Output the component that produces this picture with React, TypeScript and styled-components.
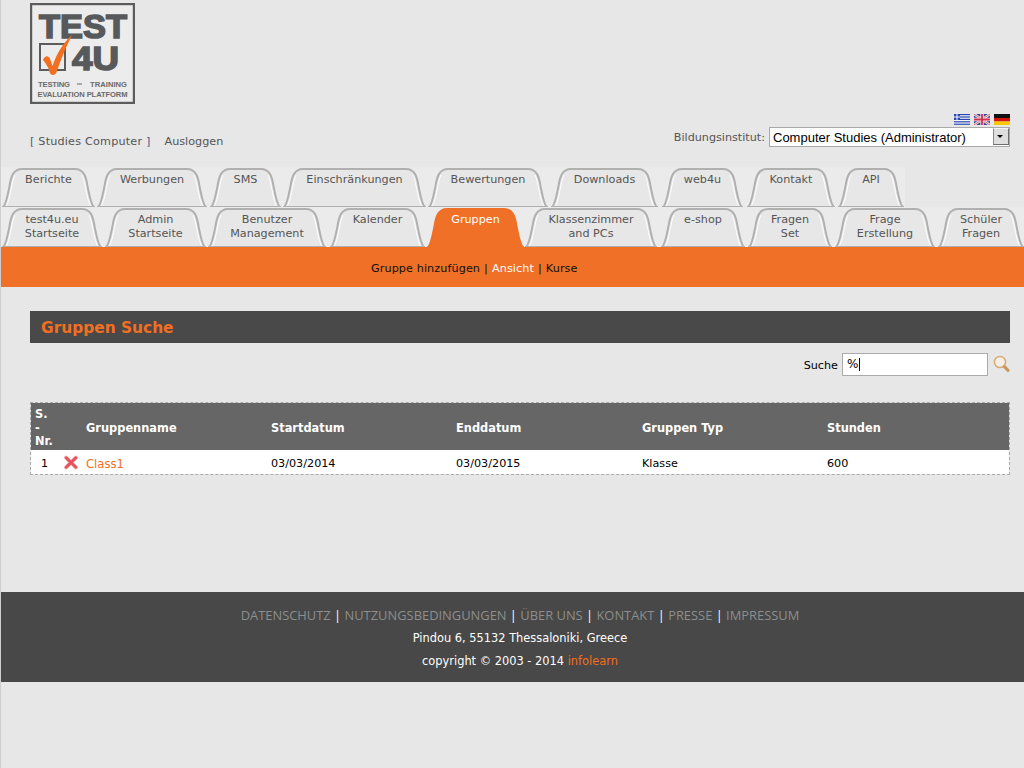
import { FC } from "react";
import styled, { createGlobalStyle } from "styled-components";

const GlobalStyle = createGlobalStyle`
  html, body {
    margin: 0;
    padding: 0;
    background: #e7e7e7;
  }
  body {
    font-family: "DejaVu Sans", Verdana, sans-serif;
    font-size: 11.2px;
    color: #000;
  }
`;

interface TabData {
  label: string[];
  width: number;
  gap: number;
  active?: boolean;
}

const topTabs: TabData[] = [
  { label: ["Berichte"], width: 93, gap: 2 },
  { label: ["Werbungen"], width: 110, gap: 3 },
  { label: ["SMS"], width: 71, gap: 2 },
  { label: ["Einschränkungen"], width: 143, gap: 2 },
  { label: ["Bewertungen"], width: 120, gap: 3 },
  { label: ["Downloads"], width: 107, gap: 4 },
  { label: ["web4u"], width: 81, gap: 4 },
  { label: ["Kontakt"], width: 88, gap: 3 },
  { label: ["API"], width: 66, gap: 0 },
];

const mainTabs: TabData[] = [
  { label: ["test4u.eu", "Startseite"], width: 100, gap: 3 },
  { label: ["Admin", "Startseite"], width: 101, gap: 2 },
  { label: ["Benutzer", "Management"], width: 118, gap: 4 },
  { label: ["Kalender"], width: 95, gap: 2 },
  { label: ["Gruppen"], width: 97, gap: 1, active: true },
  { label: ["Klassenzimmer", "and PCs"], width: 132, gap: 4 },
  { label: ["e-shop"], width: 84, gap: 3 },
  { label: ["Fragen", "Set"], width: 84, gap: 3 },
  { label: ["Frage", "Erstellung"], width: 100, gap: 3 },
  { label: ["Schüler", "Fragen"], width: 86, gap: 0 },
];

const rows = [
  { no: 1, name: "Class1", start: "03/03/2014", end: "03/03/2015", type: "Klasse", hours: 600 },
];

const TabShape: FC<{ width: number; active?: boolean }> = ({ width: w, active }) => {
  const h = 39;
  const outline = `M1 ${h} C4 ${h - 2} 5.5 ${h - 11} 7.5 ${h - 21} C9 9 11 1 20 1 L${w - 20} 1 C${w - 11} 1 ${w - 9} 9 ${w - 7.5} ${h - 21} C${w - 5.5} ${h - 11} ${w - 4} ${h - 2} ${w - 1} ${h}`;
  const innerLeft = `M4 ${h - 1} C6.5 ${h - 4} 8 ${h - 12} 9.8 ${h - 21} C10.6 14 11.5 10 13 7`;
  const innerRight = `M${w - 4} ${h - 1} C${w - 6.5} ${h - 4} ${w - 8} ${h - 12} ${w - 9.8} ${h - 21} C${w - 10.6} 14 ${w - 11.5} 10 ${w - 13} 7`;
  return (
    <TabSvg width={w} height={h} viewBox={`0 0 ${w} ${h}`}>
      {active ? (
        <path d={`${outline} Z`} fill="#ef7026" stroke="#ef7026" strokeWidth="2" />
      ) : (
        <>
          <path d={`${outline} Z`} fill="#e7e7e7" stroke="none" />
          <path d={innerLeft} fill="none" stroke="#ffffff" strokeWidth="1" />
          <path d={innerRight} fill="none" stroke="#ffffff" strokeWidth="1" />
          <path d={outline} fill="none" stroke="#b0b0b0" strokeWidth="2" />
          <path d={`M0 ${h - 0.5} H${w}`} fill="none" stroke="#b0b0b0" strokeWidth="1" />
        </>
      )}
    </TabSvg>
  );
};

const TabRow: FC<{ tabs: TabData[]; band?: boolean }> = ({ tabs, band }) => (
  <TabBand $band={band}>
    {tabs.map((tab) => (
      <Tab key={tab.label.join(" ")} $width={tab.width} $gap={tab.gap} $active={tab.active}>
        <TabShape width={tab.width} active={tab.active} />
        <TabLabel>
          {tab.label.map((line) => (
            <span key={line}>{line}</span>
          ))}
        </TabLabel>
      </Tab>
    ))}
  </TabBand>
);

const Logo = () => (
  <svg width="105" height="101" viewBox="0 0 105 101">
    <rect x="1" y="1" width="103" height="99" fill="#ececec" stroke="#5c5c5c" strokeWidth="2.4" />
    <text x="9" y="35" fontFamily="Liberation Sans" fontWeight="700" fontSize="34" fill="#58595b" textLength="88" lengthAdjust="spacingAndGlyphs" stroke="#58595b" strokeWidth="1.6">TEST</text>
    <rect x="10" y="41" width="25" height="26" fill="none" stroke="#5c5c5c" strokeWidth="2" />
    <text x="42" y="67" fontFamily="Liberation Sans" fontWeight="700" fontSize="34" fill="#58595b" textLength="47" lengthAdjust="spacingAndGlyphs" stroke="#58595b" strokeWidth="1.6">4U</text>
    <path d="M13 57 C15 52 19 52 20.5 57 C21.5 60 22 62 22.5 63 C27 50 33 40 42 32 C37 42 31 56 27 68 C25.5 73 21 73 19.5 69 C18.5 64 16 61 13 57 Z" fill="#f26f21" />
    <text x="8" y="84" fontFamily="Liberation Sans" fontWeight="700" fontSize="7.6" fill="#6a6a6a" textLength="32" lengthAdjust="spacing">TESTING</text>
    <rect x="47" y="80.5" width="5" height="1" fill="#6a6a6a" />
    <text x="60" y="84" fontFamily="Liberation Sans" fontWeight="700" fontSize="7.6" fill="#6a6a6a" textLength="37" lengthAdjust="spacing">TRAINING</text>
    <text x="7.5" y="94" fontFamily="Liberation Sans" fontWeight="700" fontSize="7.6" fill="#6a6a6a" textLength="90" lengthAdjust="spacing">EVALUATION PLATFORM</text>
  </svg>
);

const GreekFlag = () => (
  <svg width="16" height="11" viewBox="0 0 16 11">
    <rect width="16" height="11" fill="#f4f6fb" />
    {[0, 2.4, 4.8, 7.2, 9.6].map((y) => (
      <rect key={y} y={y} width="16" height="1.2" fill="#2a45b0" />
    ))}
    <rect width="6" height="6" fill="#2a45b0" />
    <rect x="2.5" width="1" height="6" fill="#fff" />
    <rect y="2.5" width="6" height="1" fill="#fff" />
  </svg>
);

const UkFlag = () => (
  <svg width="16" height="11" viewBox="0 0 16 11">
    <rect width="16" height="11" fill="#39479a" />
    <path d="M0 0 L16 11 M16 0 L0 11" stroke="#f3e6ea" strokeWidth="2.4" />
    <path d="M0 0 L16 11 M16 0 L0 11" stroke="#d0455f" strokeWidth="0.8" />
    <path d="M8 0 V11 M0 5.5 H16" stroke="#f3e6ea" strokeWidth="3.4" />
    <path d="M8 0 V11 M0 5.5 H16" stroke="#cf3350" strokeWidth="1.8" />
  </svg>
);

const GermanFlag = () => (
  <svg width="16" height="11" viewBox="0 0 16 11">
    <rect width="16" height="4" fill="#111" />
    <rect y="4" width="16" height="3.5" fill="#d3160f" />
    <rect y="7.5" width="16" height="3.5" fill="#f8c800" />
  </svg>
);

const DeleteIcon = () => (
  <svg width="14" height="15" viewBox="0 0 14 15">
    <path d="M2 2.6 L12 12.4 M12 2.6 L2 12.4" stroke="#f4b9bd" strokeWidth="4" strokeLinecap="round" />
    <path d="M2.2 2.8 L11.8 12.2 M11.8 2.8 L2.2 12.2" stroke="#e8505a" strokeWidth="2.8" strokeLinecap="round" />
  </svg>
);

const SearchIcon = () => (
  <svg width="17" height="18" viewBox="0 0 17 18">
    <circle cx="7" cy="7" r="5.6" fill="#f3efe6" stroke="#d9a873" strokeWidth="1.5" />
    <path d="M11.4 11.6 L15 15.4" stroke="#c9965f" strokeWidth="3" strokeLinecap="round" />
  </svg>
);

const App = () => (
  <Page>
    <GlobalStyle />
    <Header>
      <Logo />
      <Flags>
        <GreekFlag />
        <UkFlag />
        <GermanFlag />
      </Flags>
      <UserBar>
        <UserLinks>
          <UserName>
            <Bracket>[</Bracket> Studies Computer <Bracket>]</Bracket>
          </UserName>
          <span>Ausloggen</span>
        </UserLinks>
        <Institute>
          <label htmlFor="institute">Bildungsinstitut:</label>
          <SelectBox>
            <Select id="institute" defaultValue="cs">
              <option value="cs">Computer Studies (Administrator)</option>
            </Select>
            <SelectArrow />
          </SelectBox>
        </Institute>
      </UserBar>
    </Header>

    <TabRow tabs={topTabs} band />
    <TabRow tabs={mainTabs} />

    <SubNav>
      <span>Gruppe hinzufügen</span>
      <SubNavSeparator>|</SubNavSeparator>
      <SubNavActive>Ansicht</SubNavActive>
      <SubNavSeparator>|</SubNavSeparator>
      <span>Kurse</span>
    </SubNav>

    <Content>
      <Title>Gruppen Suche</Title>
      <SearchBar>
        <SearchLabel htmlFor="search">Suche</SearchLabel>
        <SearchField>
          <SearchInput id="search" defaultValue="%" />
          <Caret />
        </SearchField>
        <SearchIcon />
      </SearchBar>

      <Table>
        <colgroup>
          <col width="29" />
          <col width="21" />
          <col width="185" />
          <col width="185" />
          <col width="186" />
          <col width="185" />
          <col />
        </colgroup>
        <thead>
          <tr>
            <NumberHead>
              S.
              <br />-<br />
              Nr.
            </NumberHead>
            <HeadCell />
            <HeadCell>Gruppenname</HeadCell>
            <HeadCell>Startdatum</HeadCell>
            <HeadCell>Enddatum</HeadCell>
            <HeadCell>Gruppen Typ</HeadCell>
            <HeadCell>Stunden</HeadCell>
          </tr>
        </thead>
        <tbody>
          {rows.map((row) => (
            <tr key={row.no}>
              <NumberCell>{row.no}</NumberCell>
              <IconCell>
                <DeleteIcon />
              </IconCell>
              <Cell>
                <RowLink>{row.name}</RowLink>
              </Cell>
              <Cell>{row.start}</Cell>
              <Cell>{row.end}</Cell>
              <Cell>{row.type}</Cell>
              <Cell>{row.hours}</Cell>
            </tr>
          ))}
        </tbody>
      </Table>
    </Content>

    <Footer>
      <FooterLinks>
        <FooterLink>DATENSCHUTZ</FooterLink> | <FooterLink>NUTZUNGSBEDINGUNGEN</FooterLink> |{" "}
        <FooterLink>ÜBER UNS</FooterLink> | <FooterLink>KONTAKT</FooterLink> |{" "}
        <FooterLink>PRESSE</FooterLink> | <FooterLink>IMPRESSUM</FooterLink>
      </FooterLinks>
      <div>Pindou 6, 55132 Thessaloniki, Greece</div>
      <div>
        copyright © 2003 - 2014 <FooterBrand>infolearn</FooterBrand>
      </div>
    </Footer>
  </Page>
);

export default App;

const Page = styled.div`
  min-height: 768px;
  box-sizing: border-box;
  border-left: 1px solid #cfcfcf;
  overflow: hidden;
`;

const Header = styled.header`
  height: 167px;
  box-sizing: border-box;
  padding: 3px 14px 0 29px;
  display: flex;
  flex-direction: column;
  align-items: flex-start;
`;

const Flags = styled.div`
  align-self: flex-end;
  display: flex;
  gap: 4px;
  margin-top: 10px;
  height: 13px;
  svg {
    display: block;
  }
`;

const UserBar = styled.div`
  align-self: stretch;
  display: flex;
  justify-content: space-between;
  align-items: center;
  height: 20px;
  color: #555;
`;

const UserLinks = styled.div`
  display: flex;
  gap: 14px;
  margin-top: 8px;
`;

const UserName = styled.span`
  letter-spacing: 0.2px;
`;

const Bracket = styled.span`
  color: #3a5f8f;
`;

const Institute = styled.div`
  display: flex;
  align-items: center;
  gap: 4px;
`;

const SelectBox = styled.div`
  position: relative;
  width: 241px;
  height: 20px;
`;

const Select = styled.select`
  appearance: none;
  display: block;
  width: 100%;
  height: 100%;
  box-sizing: border-box;
  border: 1px solid #a9a9a9;
  border-radius: 0;
  background: #fff;
  padding: 0 20px 0 3px;
  font-family: "Liberation Sans", Arial, sans-serif;
  font-size: 13px;
  color: #000;
`;

const SelectArrow = styled.span`
  position: absolute;
  top: 1px;
  right: 1px;
  width: 16px;
  height: 17px;
  box-sizing: border-box;
  background: #dedede;
  border: 1px solid;
  border-color: #f4f4f4 #6f6f6f #6f6f6f #8a8a8a;
  &::after {
    content: "";
    position: absolute;
    left: 3px;
    top: 6px;
    border-style: solid;
    border-width: 3.5px 3.5px 0 3.5px;
    border-color: #000 transparent transparent transparent;
  }
`;

const TabBand = styled.nav<{ $band?: boolean }>`
  display: flex;
  height: 40px;
  box-sizing: border-box;
  padding: 1px 0 0 1px;
  background: ${(p) => (p.$band ? "linear-gradient(#ebebeb, #ebebeb) no-repeat left / 904px 100%" : "#ebebeb")};
`;

const Tab = styled.div<{ $width: number; $gap: number; $active?: boolean }>`
  position: relative;
  flex: none;
  width: ${(p) => p.$width}px;
  height: 39px;
  margin-right: ${(p) => p.$gap}px;
  color: ${(p) => (p.$active ? "#fff" : "#555")};
  text-align: center;
`;

const TabSvg = styled.svg`
  position: absolute;
  left: 0;
  top: 0;
`;

const TabLabel = styled.div`
  position: relative;
  display: flex;
  flex-direction: column;
  padding-top: 5px;
  line-height: 14px;
`;

const SubNav = styled.div`
  height: 40px;
  box-sizing: border-box;
  padding-left: 370px;
  background: #ef7026;
  line-height: 43px;
  color: #111;
  letter-spacing: 0.1px;
`;

const SubNavSeparator = styled.span`
  margin: 0 4px;
`;

const SubNavActive = styled.span`
  color: #fff;
`;

const Content = styled.main`
  padding: 24px 14px 0 29px;
  height: 305px;
  box-sizing: border-box;
`;

const Title = styled.h1`
  margin: 0;
  height: 32px;
  padding-left: 11px;
  background: #484948;
  color: #f26f21;
  font-size: 15.4px;
  font-weight: 700;
  line-height: 34px;
`;

const SearchBar = styled.div`
  display: flex;
  justify-content: flex-end;
  align-items: center;
  gap: 4px;
  height: 24px;
  margin-top: 9px;
  margin-bottom: 26px;
  svg {
    margin-left: 1px;
  }
`;

const SearchLabel = styled.label`
  padding-top: 2px;
`;

const SearchField = styled.div`
  position: relative;
  width: 146px;
  height: 23px;
`;

const SearchInput = styled.input`
  display: block;
  width: 100%;
  height: 100%;
  box-sizing: border-box;
  border: 1px solid #aaa;
  background: #fff;
  padding: 0 4px;
  font-family: inherit;
  font-size: 12px;
`;

const Caret = styled.span`
  position: absolute;
  left: 17px;
  top: 5px;
  width: 1px;
  height: 13px;
  background: #000;
`;

const Table = styled.table`
  width: 100%;
  table-layout: fixed;
  border-collapse: separate;
  border-spacing: 0;
  border: 1px dashed #aaa;
`;

const HeadCell = styled.th`
  background: #666;
  color: #fff;
  font-size: 11.4px;
  font-weight: 700;
  line-height: 13.5px;
  text-align: left;
  padding: 5px 0 1px 5px;
  height: 40px;
`;

const NumberHead = styled(HeadCell)`
  padding-left: 4px;
`;

const Cell = styled.td`
  background: #fff;
  height: 24px;
  padding: 4px 0 0 5px;
  box-sizing: border-box;
`;

const NumberCell = styled(Cell)`
  padding-left: 10px;
`;

const IconCell = styled(Cell)`
  padding: 2px 0 0 4px;
  svg {
    display: block;
  }
`;

const RowLink = styled.span`
  color: #f26f21;
  font-size: 11.6px;
`;

const Footer = styled.footer`
  height: 90px;
  box-sizing: border-box;
  padding: 12px 0 0 15px;
  background: #474847;
  color: #fff;
  font-size: 11.4px;
  text-align: center;
  line-height: 23px;
`;

const FooterLinks = styled.div`
  font-family: "Open Sans", sans-serif;
  font-size: 12.9px;
`;

const FooterLink = styled.span`
  color: #8e8e8e;
`;

const FooterBrand = styled.span`
  color: #f26f21;
`;
